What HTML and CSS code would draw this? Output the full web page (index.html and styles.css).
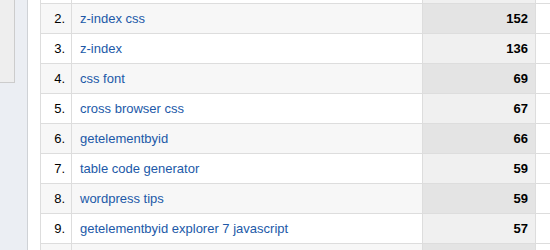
FILE: index.html
```html
<!DOCTYPE html>
<html>
<head>
<meta charset="utf-8">
<link rel="stylesheet" href="styles.css">
</head>
<body>
<div class="page">
  <aside class="sidebar"><div class="sidebox"></div></aside>
  <div class="main">
    <table class="report">
      <tr class="odd"><td class="num"></td><td class="kw"></td><td class="count"></td><td class="extra"></td></tr>
      <tr class="even"><td class="num">2.</td><td class="kw"><a href="#">z-index css</a></td><td class="count">152</td><td class="extra"></td></tr>
      <tr class="odd"><td class="num">3.</td><td class="kw"><a href="#">z-index</a></td><td class="count">136</td><td class="extra"></td></tr>
      <tr class="even"><td class="num">4.</td><td class="kw"><a href="#">css font</a></td><td class="count">69</td><td class="extra"></td></tr>
      <tr class="odd"><td class="num">5.</td><td class="kw"><a href="#">cross browser css</a></td><td class="count">67</td><td class="extra"></td></tr>
      <tr class="even"><td class="num">6.</td><td class="kw"><a href="#">getelementbyid</a></td><td class="count">66</td><td class="extra"></td></tr>
      <tr class="odd"><td class="num">7.</td><td class="kw"><a href="#">table code generator</a></td><td class="count">59</td><td class="extra"></td></tr>
      <tr class="even"><td class="num">8.</td><td class="kw"><a href="#">wordpress tips</a></td><td class="count">59</td><td class="extra"></td></tr>
      <tr class="odd"><td class="num">9.</td><td class="kw"><a href="#">getelementbyid explorer 7 javascript</a></td><td class="count">57</td><td class="extra"></td></tr>
      <tr class="even"><td class="num"></td><td class="kw"></td><td class="count"></td><td class="extra"></td></tr>
    </table>
  </div>
</div>
</body>
</html>
```
FILE: styles.css
```css
html, body {
  margin: 0;
  padding: 0;
  background: #ffffff;
  overflow: hidden;
}
body {
  font-family: "Liberation Sans", Arial, sans-serif;
  font-size: 13px;
}
.page {
  display: flex;
  height: 250px;
  overflow: hidden;
}
.sidebar {
  width: 27px;
  flex: none;
  background: #ebeef3;
  border-right: 1px solid #cfd2d6;
}
.sidebox {
  width: 14px;
  height: 82px;
  background: #eeeeee;
  border-right: 1px solid #cccccc;
  border-bottom: 1px solid #cccccc;
}
.main {
  margin-left: 12px;
  margin-top: -26px;
  flex: none;
}
.report {
  border-collapse: separate;
  border-spacing: 0;
  table-layout: fixed;
}
.report td {
  height: 29px;
  padding: 0;
  border-bottom: 1px solid #dddddd;
  border-right: 1px solid #dddddd;
  vertical-align: middle;
  white-space: nowrap;
}
.report td.num {
  width: 24px;
  padding-right: 6px;
  text-align: right;
  color: #000000;
  border-left: 1px solid #dddddd;
}
.report td.kw {
  width: 342px;
  padding-left: 8px;
}
.report td.kw a {
  color: #2159a8;
  text-decoration: none;
}
.report td.count {
  width: 105px;
  padding-right: 7px;
  text-align: right;
  font-weight: bold;
  color: #000000;
}
.report td.extra {
  width: 100px;
}
.report tr.even td.num,
.report tr.even td.kw {
  background: #f7f7f7;
}
.report tr.even td.count {
  background: #e4e4e4;
}
.report tr.odd td.count {
  background: #f0f0f0;
}
```
